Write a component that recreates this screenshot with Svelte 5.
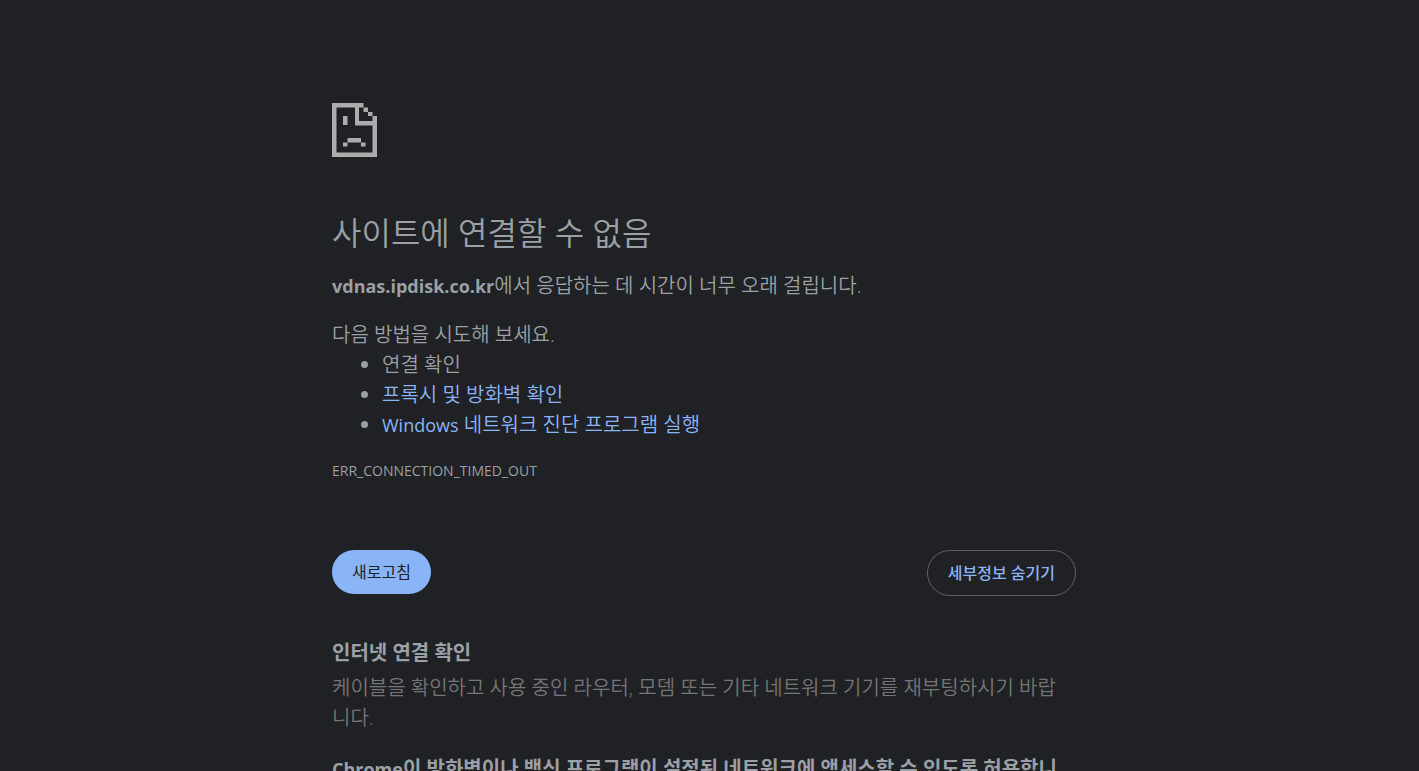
<script>
  const host = 'vdnas.ipdisk.co.kr';
  const errorCode = 'ERR_CONNECTION_TIMED_OUT';

  let showDetails = $state(true);

  function reload() {
    location.reload();
  }
</script>

<div class="page">
  <main class="frame">
    <svg class="icon" viewBox="0 0 90 108" aria-hidden="true">
      <path d="M0 0h63v9H9v90h72V45H46V9h8v27h27V26h9v82H0z" />
      <path d="M63 9h9v9h-9zM72 18h9v8h-9z" />
      <path d="M22 26h9v18h-9zM31 70h27v9H31zM22 79h9v8h-9zM58 79h9v8h-9z" />
    </svg>

    <h1>사이트에 연결할 수 없음</h1>
    <p class="summary"><strong class="latin">{host}</strong>에서 응답하는 데 시간이 너무 오래 걸립니다.</p>

    <div class="suggestions">
      <p>다음 방법을 시도해 보세요.</p>
      <ul>
        <li>연결 확인</li>
        <li><a href="#proxy">프록시 및 방화벽 확인</a></li>
        <li><a href="#diagnose"><span class="latin">Windows</span> 네트워크 진단 프로그램 실행</a></li>
      </ul>
    </div>

    <div class="error-code">{errorCode}</div>

    <div class="buttons">
      <button class="primary" onclick={reload}>새로고침</button>
      <button class="secondary" onclick={() => (showDetails = !showDetails)}>
        {showDetails ? '세부정보 숨기기' : '세부정보'}
      </button>
    </div>

    {#if showDetails}
      <section class="details">
        <h2 id="diagnose">인터넷 연결 확인</h2>
        <p>케이블을 확인하고 사용 중인 라우터, 모뎀 또는 기타 네트워크 기기를 재부팅하시기 바랍니다.</p>
        <h2 id="proxy"><span class="latin">Chrome</span>이 방화벽이나 백신 프로그램이 설정된 네트워크에 액세스할 수 있도록 허용합니다.</h2>
      </section>
    {/if}
  </main>
</div>

<style>
  :global(body) {
    margin: 0;
    background: #202124;
  }

  .page {
    box-sizing: border-box;
    height: 100vh;
    overflow: hidden;
    padding: 103px 11px 0 0;
    color: #9aa0a6;
    font-family: 'Open Sans', 'Noto Sans CJK KR', sans-serif;
    font-size: 20px;
    font-weight: 350;
    line-height: 30px;
  }

  .frame {
    max-width: 744px;
    margin: 0 auto;
  }

  .icon {
    display: block;
    width: 45px;
    height: 54px;
    fill: #acacac;
  }

  h1,
  h2,
  p,
  ul {
    margin: 0;
  }

  h1 {
    margin-top: 56px;
    font-size: 32px;
    font-weight: 350;
    line-height: 40px;
  }

  .latin {
    font-size: 18px;
    font-weight: 400;
    line-height: 1;
  }

  strong.latin,
  h2 .latin {
    font-weight: 700;
  }

  .summary {
    margin-top: 18px;
  }

  .suggestions {
    margin-top: 19px;
  }

  ul {
    padding-left: 50px;
  }

  a {
    color: #8ab4f8;
    text-decoration: none;
  }

  .error-code {
    margin-top: 20px;
    font-size: 14px;
    font-weight: 400;
    line-height: 22px;
  }

  .buttons {
    display: flex;
    align-items: flex-start;
    justify-content: space-between;
    margin-top: 68px;
  }

  button {
    padding: 10px 20px;
    border: 0;
    border-radius: 24px;
    font-family: inherit;
    font-size: 16px;
    font-weight: 500;
    line-height: 24px;
    cursor: pointer;
  }

  .primary {
    background: #8ab4f8;
    color: #202124;
    font-weight: 400;
  }

  .secondary {
    border: 1px solid #5f6368;
    background: transparent;
    color: #8ab4f8;
  }

  .details {
    margin-top: 42px;
    padding-right: 10px;
    color: #757575;
  }

  h2 {
    color: #9aa0a6;
    font-size: 20px;
    font-weight: 700;
  }

  .details p {
    margin: 5px 0 21px;
  }
</style>
